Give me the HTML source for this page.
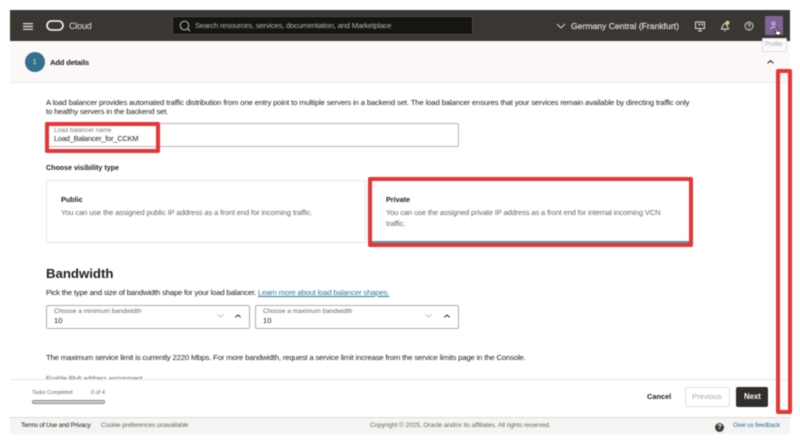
<!DOCTYPE html>
<html><head><meta charset="utf-8"><style>
html,body{margin:0;padding:0;background:#fff}
#p{position:relative;width:800px;height:445px;overflow:hidden;background:#fff;font-family:"Liberation Sans",sans-serif;color:#1f1d1b;filter:blur(.45px)}
#p div,#p span.a{position:absolute;box-sizing:border-box}
.t{white-space:nowrap;font-size:7.6px;line-height:10px}
.b{font-weight:bold}
.g{color:#6b6762}
.red{border:4px solid #e53535;border-radius:2px}
svg{position:absolute}
</style></head><body><div id="p">
<div style="left:10px;top:10px;width:780px;height:31px;background:#3a3632"></div>
<svg style="left:23px;top:23px" width="10" height="7"><path d="M0 .7H10M0 3.5H10M0 6.3H10" stroke="#eee" stroke-width="1.2"/></svg>
<svg style="left:46px;top:20px" width="18" height="11"><rect x="1" y="1" width="16" height="9" rx="4.5" fill="none" stroke="#fff" stroke-width="1.6"/></svg>
<div class="t" style="left:69px;top:20px;color:#e4e2df;font-size:9px;letter-spacing:-.2px;line-height:12px">Cloud</div>
<div style="left:172px;top:16px;width:301px;height:19px;background:#161513;border:1px solid #4b4844;border-radius:2px"></div>
<svg style="left:178px;top:19px" width="14" height="14"><circle cx="6.5" cy="6.5" r="4.3" fill="none" stroke="#ccc" stroke-width=".9"/><path d="M9.6 9.6L12 12" stroke="#ccc" stroke-width=".9"/></svg>
<div class="t" style="left:195px;top:21px;color:#b5b2ae;font-size:7.7px;letter-spacing:-.21px">Search resources, services, documentation, and Marketplace</div>
<svg style="left:556px;top:23px" width="10" height="6"><path d="M1 1L5 5L9 1" fill="none" stroke="#ddd" stroke-width=".9"/></svg>
<div class="t" style="left:571px;top:20px;color:#dedcd9;font-size:8.6px;line-height:12px;-webkit-text-stroke:.2px #dedcd9">Germany Central (Frankfurt)</div>
<svg style="left:694px;top:20px" width="12" height="12"><rect x="1.5" y="2" width="9" height="6.5" fill="none" stroke="#ddd"/><path d="M4 4h1.5v2M7 4h1.5v2M6 8.5V11M4 11H8" stroke="#ddd" fill="none" stroke-width=".9"/></svg>
<svg style="left:719px;top:20px" width="12" height="12"><path d="M2.5 9C3.5 8 3 4 6 3.5C8.5 4 8.5 8 9.5 9Z" fill="none" stroke="#ddd"/><path d="M5 10.5H7" stroke="#ddd"/><circle cx="8.5" cy="2.8" r="2" fill="#e8c860"/></svg>
<svg style="left:743px;top:20px" width="12" height="12"><circle cx="6" cy="6" r="4" fill="none" stroke="#ddd" stroke-width=".9"/><path d="M4.7 5C4.8 3.4 7.3 3.4 7.3 5C7.3 6 6 6 6 7" fill="none" stroke="#ddd" stroke-width=".8"/><circle cx="6" cy="8.2" r=".5" fill="#ddd"/></svg>
<div style="left:765px;top:16px;width:18px;height:19px;background:#80639a;border-radius:1px"></div>
<svg style="left:768px;top:20px" width="12" height="12"><circle cx="5.5" cy="3.5" r="1.5" fill="none" stroke="#e6dfee" stroke-width=".8"/><path d="M3 9C3 6.5 8 6.5 8 9" fill="none" stroke="#e6dfee" stroke-width=".8"/></svg>

<div style="left:10px;top:41px;width:780px;height:42px;background:#fbf8f7;border-bottom:1px solid #eeeae7"></div>
<div style="left:24.5px;top:52px;width:20px;height:20px;border-radius:50%;background:#33708c"></div>
<div class="t" style="left:32.5px;top:57px;color:#d7e3e8;font-size:7.5px">1</div>
<div class="t b" style="left:50px;top:57.5px;letter-spacing:-.18px">Add details</div>
<svg style="left:766px;top:59px" width="9" height="6"><path d="M1.5 4.3L4.5 1.7L7.5 4.3" fill="none" stroke="#222" stroke-width="1"/></svg>
<div style="left:761.5px;top:38px;width:25px;height:14px;background:#fbfafa;border:1px solid #e2e0de;border-radius:1px"></div>
<div class="t g" style="left:765px;top:40px;font-size:6.2px;color:#aaa">Profile</div>
<svg style="left:773px;top:27px;z-index:2" width="10" height="10"><path d="M2 1.5L4 1V4L7.5 4.5V8H3.5L1.5 5H3Z" fill="#fff" stroke="#222" stroke-width=".7"/></svg>

<div class="t" style="left:46px;top:98px;font-size:7.75px;letter-spacing:-.16px">A load balancer provides automated traffic distribution from one entry point to multiple servers in a backend set. The load balancer ensures that your services remain available by directing traffic only</div>
<div class="t" style="left:46px;top:107px;font-size:7.75px;letter-spacing:-.16px">to healthy servers in the backend set.</div>

<div style="left:46px;top:123px;width:413px;height:24px;border:1px solid #b9b6b2;border-radius:2px;background:#fff"></div>
<div class="t g" style="left:54px;top:125.5px;font-size:6.3px;color:#7d7974">Load balancer name</div>
<div class="t" style="left:54px;top:134px;font-size:7.4px;letter-spacing:-.18px">Load_Balancer_for_CCKM</div>
<div class="red" style="left:45px;top:122px;width:115px;height:31px"></div>

<div class="t b" style="left:46px;top:163px;font-size:7.1px">Choose visibility type</div>
<div style="left:46px;top:180px;width:320px;height:62.5px;border:1px solid #e9e7e5;border-radius:2px"></div>
<div class="t b" style="left:61px;top:194.5px;font-size:7.2px">Public</div>
<div class="t g" style="left:61px;top:208px;font-size:7.6px;letter-spacing:-.13px">You can use the assigned public IP address as a front end for incoming traffic.</div>
<div style="left:372px;top:181px;width:317px;height:62px;border-bottom:2px solid #5f8fa5"></div>
<div class="t b" style="left:386px;top:194.5px;font-size:7.2px">Private</div>
<div class="t g" style="left:386px;top:208px;font-size:7.6px;letter-spacing:-.15px">You can use the assigned private IP address as a front end for internal incoming VCN</div>
<div class="t g" style="left:386px;top:219px;font-size:7.6px;letter-spacing:-.15px">traffic.</div>
<div class="red" style="left:368px;top:177px;width:325px;height:70px;border-bottom-width:4px"></div>

<div class="t b" style="left:46px;top:265px;font-size:13.2px;line-height:18px">Bandwidth</div>
<div class="t" style="left:46px;top:288px;font-size:7.75px;letter-spacing:-.21px">Pick the type and size of bandwidth shape for your load balancer. <span style="color:#2b7a99;text-decoration:underline">Learn more about load balancer shapes.</span></div>

<div style="left:46px;top:305px;width:204px;height:24px;border:1px solid #b0ada9;border-radius:2px"></div>
<div class="t g" style="left:54px;top:307px;font-size:6.5px">Choose a minimum bandwidth</div>
<div class="t" style="left:54px;top:316px;font-size:7.6px">10</div>
<svg style="left:216px;top:313px" width="9" height="6"><path d="M1.5 1.5L4.5 4L7.5 1.5" fill="none" stroke="#aaa" stroke-width=".8"/></svg>
<svg style="left:233px;top:313px" width="10" height="6"><path d="M2.3 4.3L5 2L7.7 4.3" fill="none" stroke="#222" stroke-width="1"/></svg>
<div style="left:255px;top:305px;width:204px;height:24px;border:1px solid #b0ada9;border-radius:2px"></div>
<div class="t g" style="left:263px;top:307px;font-size:6.5px">Choose a maximum bandwidth</div>
<div class="t" style="left:263px;top:316px;font-size:7.6px">10</div>
<svg style="left:424px;top:313px" width="9" height="6"><path d="M1.5 1.5L4.5 4L7.5 1.5" fill="none" stroke="#aaa" stroke-width=".8"/></svg>
<svg style="left:442px;top:313px" width="10" height="6"><path d="M2.3 4.3L5 2L7.7 4.3" fill="none" stroke="#222" stroke-width="1"/></svg>

<div class="t" style="left:46px;top:353px;font-size:7.75px;letter-spacing:-.18px">The maximum service limit is currently 2220 Mbps. For more bandwidth, request a service limit increase from the service limits page in the Console.</div>
<div class="t g" style="left:46px;top:375px;font-size:7px;letter-spacing:-.2px">Enable IPv6 address assignment</div>

<div style="left:10px;top:379px;width:780px;height:39px;background:#fff;border-top:1px solid #e9e7e5;border-bottom:1px solid #dedbd8"></div>
<div class="t g" style="left:32px;top:389px;font-size:5.3px;line-height:8px">Tasks Completed</div>
<div class="t g" style="left:91px;top:389px;font-size:5.6px;line-height:8px">0 of 4</div>
<div style="left:32px;top:400px;width:73px;height:4px;border-radius:2px;background:#d2d0cd;border:1px solid #8e8b87"></div>
<div class="t b" style="left:647px;top:392px;font-size:7.4px">Cancel</div>
<div style="left:684.5px;top:387px;width:45px;height:20px;border:1px solid #e3e1df;border-radius:2px;background:#fff"></div>
<div class="t" style="left:692px;top:392px;font-size:7.7px;color:#a9a7a4;letter-spacing:-.05px">Previous</div>
<div style="left:736px;top:387px;width:32px;height:20px;background:#312d2a;border-radius:2px"></div>
<div class="t b" style="left:744px;top:392px;font-size:7.8px;color:#fff">Next</div>

<div style="left:10px;top:418px;width:780px;height:16px;background:#f5f4f2"></div>
<div class="t" style="left:21px;top:421px;font-size:6.6px;letter-spacing:-.23px">Terms of Use and Privacy</div>
<div class="t g" style="left:101px;top:421px;font-size:6.6px;letter-spacing:-.17px">Cookie preferences unavailable</div>
<div class="t g" style="left:370px;top:421px;font-size:6.6px;letter-spacing:-.1px">Copyright © 2025, Oracle and/or its affiliates. All rights reserved.</div>
<div style="left:715px;top:423px;width:9px;height:9px;border-radius:50%;background:#3f3c39"></div>
<div class="t b" style="left:717.5px;top:423px;font-size:7px;line-height:9px;color:#fff">?</div>
<div class="t" style="left:733px;top:421px;font-size:6.6px;letter-spacing:-.25px;color:#2b7a99">Give us feedback</div>

<div class="red" style="left:776px;top:69px;width:16px;height:345px"></div>
</div></body></html>
